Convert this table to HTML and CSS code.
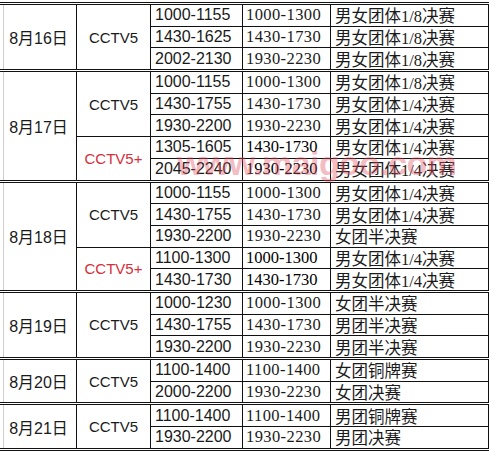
FILE: index.html
```html
<!DOCTYPE html>
<html lang="zh">
<head>
<meta charset="utf-8">
<title>赛程</title>
<link rel="stylesheet" href="styles.css">
</head>
<body>
<div class="sheet">
  <div class="block">
    <div class="pad"></div>
    <div class="date">8月16日</div>
    <div class="groups">
      <div class="group">
        <div class="ch">CCTV5</div>
        <div class="rows">
          <div class="row"><div class="t1">1000-1155</div><div class="t2">1000-1300</div><div class="ev">男女团体1/8决赛</div></div>
          <div class="row"><div class="t1">1430-1625</div><div class="t2">1430-1730</div><div class="ev">男女团体1/8决赛</div></div>
          <div class="row"><div class="t1">2002-2130</div><div class="t2">1930-2230</div><div class="ev">男女团体1/8决赛</div></div>
        </div>
      </div>
    </div>
  </div>

  <div class="block">
    <div class="pad"></div>
    <div class="date">8月17日</div>
    <div class="groups">
      <div class="group">
        <div class="ch">CCTV5</div>
        <div class="rows">
          <div class="row"><div class="t1">1000-1155</div><div class="t2">1000-1300</div><div class="ev">男女团体1/8决赛</div></div>
          <div class="row"><div class="t1">1430-1755</div><div class="t2">1430-1730</div><div class="ev">男女团体1/4决赛</div></div>
          <div class="row"><div class="t1">1930-2200</div><div class="t2">1930-2230</div><div class="ev">男女团体1/4决赛</div></div>
        </div>
      </div>
      <div class="group">
        <div class="ch plus">CCTV5+</div>
        <div class="rows">
          <div class="row"><div class="t1">1305-1605</div><div class="t2 alt">1430-1730</div><div class="ev">男女团体1/4决赛</div></div>
          <div class="row"><div class="t1">2045-2240</div><div class="t2 alt">1930-2230</div><div class="ev">男女团体1/4决赛</div></div>
        </div>
      </div>
    </div>
  </div>

  <div class="block">
    <div class="pad"></div>
    <div class="date">8月18日</div>
    <div class="groups">
      <div class="group">
        <div class="ch">CCTV5</div>
        <div class="rows">
          <div class="row"><div class="t1">1000-1155</div><div class="t2">1000-1300</div><div class="ev">男女团体1/4决赛</div></div>
          <div class="row"><div class="t1">1430-1755</div><div class="t2">1430-1730</div><div class="ev">男女团体1/4决赛</div></div>
          <div class="row"><div class="t1">1930-2200</div><div class="t2">1930-2230</div><div class="ev">女团半决赛</div></div>
        </div>
      </div>
      <div class="group">
        <div class="ch plus">CCTV5+</div>
        <div class="rows">
          <div class="row"><div class="t1">1100-1300</div><div class="t2 alt">1000-1300</div><div class="ev">男女团体1/4决赛</div></div>
          <div class="row"><div class="t1">1430-1730</div><div class="t2 alt">1430-1730</div><div class="ev">男女团体1/4决赛</div></div>
        </div>
      </div>
    </div>
  </div>

  <div class="block">
    <div class="pad"></div>
    <div class="date">8月19日</div>
    <div class="groups">
      <div class="group">
        <div class="ch">CCTV5</div>
        <div class="rows">
          <div class="row"><div class="t1">1000-1230</div><div class="t2">1000-1300</div><div class="ev">女团半决赛</div></div>
          <div class="row"><div class="t1">1430-1755</div><div class="t2">1430-1730</div><div class="ev">男团半决赛</div></div>
          <div class="row"><div class="t1">1930-2200</div><div class="t2">1930-2230</div><div class="ev">男团半决赛</div></div>
        </div>
      </div>
    </div>
  </div>

  <div class="block">
    <div class="pad"></div>
    <div class="date">8月20日</div>
    <div class="groups">
      <div class="group">
        <div class="ch">CCTV5</div>
        <div class="rows">
          <div class="row"><div class="t1">1100-1400</div><div class="t2">1100-1400</div><div class="ev">女团铜牌赛</div></div>
          <div class="row"><div class="t1">2000-2200</div><div class="t2">1930-2230</div><div class="ev">女团决赛</div></div>
        </div>
      </div>
    </div>
  </div>

  <div class="block">
    <div class="pad"></div>
    <div class="date">8月21日</div>
    <div class="groups">
      <div class="group">
        <div class="ch">CCTV5</div>
        <div class="rows">
          <div class="row"><div class="t1">1100-1400</div><div class="t2">1100-1400</div><div class="ev">男团铜牌赛</div></div>
          <div class="row"><div class="t1">1930-2200</div><div class="t2">1930-2230</div><div class="ev">男团决赛</div></div>
        </div>
      </div>
    </div>
  </div>

  <div class="watermark">www.maigoo.com</div>
</div>
</body>
</html>
```

FILE: styles.css
```css
html, body {
  margin: 0;
  padding: 0;
  background: #ffffff;
}

body {
  font-family: "Liberation Sans", "Noto Sans CJK SC", sans-serif;
  color: #1a1a1a;
}

.sheet {
  position: relative;
  width: 489px;
  margin-top: 2px;
  border-top: 3px double #111;
}

.block {
  display: flex;
  border-bottom: 3px double #111;
}

.pad {
  width: 3px;
  border-right: 1px solid #cfcfcf;
}

.date {
  width: 73px;
  box-sizing: border-box;
  padding-right: 3px;
  border-right: 1px solid #111;
  display: flex;
  align-items: center;
  justify-content: center;
  font-size: 16px;
}

.groups {
  display: flex;
  flex-direction: column;
}

.group {
  display: flex;
  border-bottom: 1px solid #111;
}

.group:last-child {
  border-bottom: none;
}

.ch {
  width: 73px;
  border-right: 1px solid #111;
  display: flex;
  align-items: center;
  justify-content: center;
  font-size: 15px;
}

.ch.plus {
  color: #d4303c;
}

.rows {
  display: flex;
  flex-direction: column;
}

.row {
  display: flex;
  height: 20.7px;
  border-bottom: 1px solid #111;
}

.row:last-child {
  border-bottom: none;
}

.t1, .t2, .ev {
  display: flex;
  align-items: center;
  white-space: nowrap;
  border-right: 1px solid #111;
}

.t1 {
  width: 87px;
  padding-left: 4px;
  font-size: 16px;
}

.t2 {
  width: 84px;
  padding-left: 3px;
  font-family: "Liberation Serif", "Noto Sans CJK SC", serif;
  font-size: 16.5px;
  letter-spacing: 0.4px;
}

.t2.alt {
  letter-spacing: 0;
  color: #000;
}

.ev {
  width: 153px;
  padding-left: 4px;
  font-family: "Liberation Serif", "Noto Sans CJK SC", serif;
  font-size: 16.5px;
  color: #1a1a1a;
}

.watermark {
  position: absolute;
  left: 177px;
  top: 141px;
  font-family: "Liberation Sans", sans-serif;
  font-weight: bold;
  font-size: 34px;
  line-height: 1;
  letter-spacing: -0.6px;
  color: rgba(228, 80, 95, 0.4);
  pointer-events: none;
  white-space: nowrap;
}
```
